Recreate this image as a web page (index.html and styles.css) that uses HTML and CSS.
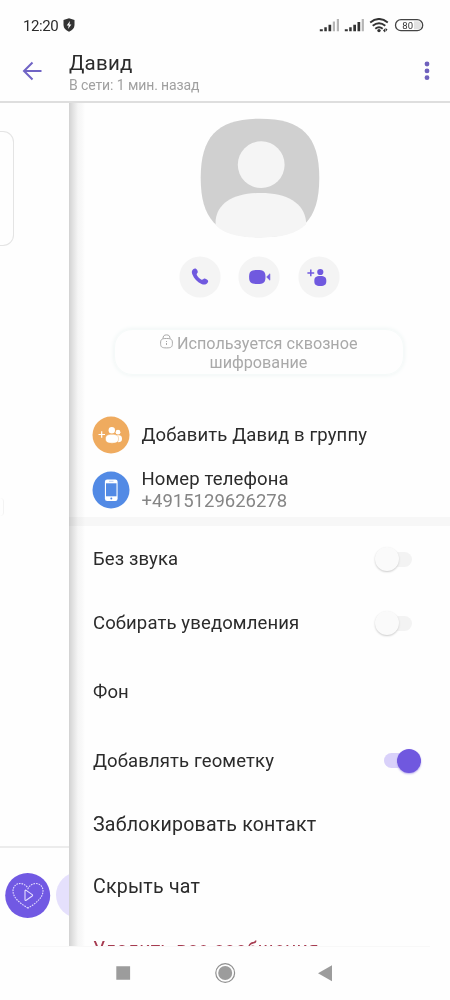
FILE: index.html
```html
<!DOCTYPE html>
<html lang="ru">
<head>
<meta charset="utf-8">
<title>Давид</title>
<link rel="stylesheet" href="styles.css">
</head>
<body>
<div class="screen">
  <div class="status">
    <span class="clock">12:20</span>
    <svg class="shield" width="12" height="14" viewBox="0 0 12 14"><path d="M6 .3 11.500 2v5c0 3-2.300 5.400-5.500 6.700C2.800 12.400.5 10 .5 7V2z" fill="#333"/><path d="M7 3 3.700 7.500h2L5 11l3.400-4.500h-2z" fill="#fff"/></svg>
    <svg class="signals" width="112" height="16" viewBox="0 0 112 16">
      <g fill="#333"><path d="M.8 11.300h3v2h-3zM5.300 9.300h2.500v4H5.300zM9.500 6.800h2.700v6.500H9.500z"/><path d="M25.800 11.300h3v2h-3zM30.200 9.300h2.500v4h-2.500zM34.300 6.800H37v6.500h-2.700zM38.500 4h2.700v9.300h-2.700z"/></g>
      <path d="M13.800 3.500H16v9.800h-2.200zM17.800 1H20v12.300h-2.200zM42.700 1h2.200v12.300h-2.200z" fill="#b5b5b5"/>
      <g fill="none" stroke="#333" stroke-width="1.900"><path d="M51.200 4.400q8.800-6.900 17.600 0"/><path d="M53.700 7.700q6.300-5 12.600 0"/><path d="M56.300 10.700q3.700-3 7.400 0"/></g>
      <circle cx="60" cy="12.600" r="1.700" fill="#333"/><path d="m64 12.500 2-2v4zm4.500-1-2 2.500v-4z" fill="#333"/>
      <rect x="76.500" y="1.700" width="27.200" height="11" rx="5.500" fill="#fff" stroke="#444" stroke-width="1.300"/><path d="M95 3.200h3.500a4 4 0 0 1 0 8H95z" fill="#e2e2e2"/>
      <text class="battery" x="83.300" y="10.700">80</text>
    </svg>
  </div>
  <header class="toolbar">
    <svg class="back" width="20" height="20" viewBox="0 0 20 20" fill="none" stroke="#7064c5" stroke-width="2"><path d="M19.500 10H2M10.500 1.500 2 10l8.500 8.500"/></svg>
    <div class="heading"><h1 class="name">Давид</h1><p class="seen">В сети: 1 мин. назад</p></div>
    <svg class="more" width="6" height="20" viewBox="0 0 6 20" fill="#6f61bd"><circle cx="3" cy="3" r="2.400"/><circle cx="3" cy="9.900" r="2.400"/><circle cx="3" cy="16.700" r="2.400"/></svg>
  </header>
  <main class="content">
    <aside class="chat">
      <div class="bubble"></div>
      <div class="reaction"></div>
      <div class="composer">
        <svg class="heart" width="46" height="46" viewBox="0 0 46 46"><circle cx="22.700" cy="23.500" r="22.500" fill="#7159e3"/><path d="M23 36C16 32 8 26 8 19c0-4.500 3.300-7.500 7-7.500 3.500 0 6.500 2 8 5 1.500-3 4.500-5 8-5 3.700 0 7 3 7 7.500C38 26 30 32 23 36z" fill="none" stroke="#e6dfff" stroke-width="1.100" stroke-dasharray="1.600 1"/><path d="M20 19v8.500q0 1.500 1.200.8l6-4.300q.8-.7 0-1.400l-6-4.200Q20 17.700 20 19z" fill="none" stroke="#e6dfff" stroke-width="1.100"/></svg>
        <div class="next"></div>
      </div>
    </aside>
    <section class="panel">
      <svg class="avatar" width="120" height="120" viewBox="0 0 120 120">
        <path d="M60 .7C102 .7 119.300 18 119.300 60S102 119.300 60 119.300.7 102 .7 60 18 .7 60 .7z" fill="#d0d0d0"/>
        <circle cx="61.200" cy="46.700" r="23.400" fill="#f5f5f5"/>
        <path d="M15.600 107V103C17 85 34 75 60.500 75S104 85 106 103v3.500C96 116 82 119.500 60 119.500S24 116 15.600 107z" fill="#f5f5f5"/>
      </svg>
      <div class="actions">
        <svg class="action" width="42" height="42" viewBox="0 0 42 42"><circle cx="21" cy="21" r="20.600" fill="#f4f4f4"/><path d="M14.200 13.200c1.500-1.300 3.200-.8 4 .8l.6 1.800c.4 1.300-1.700 1.900-1 3.200 1.300 2.300 2.500 3.500 4.800 4.700 1.200.5 1.900-1.600 3.300-1.100l2 .8c1.500.7 1.700 2.300.5 3.600-1.500 1.800-3.500 2-5.900 1-4.400-2-7.300-5.200-9.200-9.700-.8-2.200-.6-3.900.9-5.100z" fill="#7059df"/></svg>
        <svg class="action" width="42" height="42" viewBox="0 0 42 42"><circle cx="21" cy="21" r="20.600" fill="#f4f4f4"/><path d="M19.300 14c6.500 0 8.200 1.600 8.200 7s-1.700 7-8.200 7-8.200-1.600-8.200-7 1.700-7 8.200-7z" fill="#7059df"/><path d="m28.600 21 3.300-3.200v6.400z" fill="#7059df" stroke="#7059df" stroke-width=".6" stroke-linejoin="round"/></svg>
        <svg class="action" width="42" height="42" viewBox="0 0 42 42"><circle cx="21" cy="21" r="20.600" fill="#f4f4f4"/><circle cx="22.300" cy="16" r="3.100" fill="#7059df"/><path d="M22.300 20c4.600 0 6 1.400 6 5s-1.400 5-6 5-6-1.400-6-5 1.400-5 6-5z" fill="#7059df"/><path d="M9.400 16.900h6.800M12.800 13.500v6.800" stroke="#7059df" stroke-width="1.500"/></svg>
      </div>
      <div class="secure">
        <p class="secure-line"><svg width="13" height="15" viewBox="0 0 13 15" fill="none" stroke="#a9a9a9"><path d="M6.500 4.500c5 0 5.900 1 5.900 4.700s-.9 4.700-5.900 4.700-5.900-1-5.900-4.700.9-4.700 5.900-4.700zM3 4.800C3 2 4 .9 6.500.9S10 2 10 4.800M6.500 7v1m0 1v2"/></svg><span class="secure-text">Используется сквозное</span></p>
        <p class="secure-last">шифрование</p>
      </div>
      <div class="contact">
        <div class="entry"><svg width="38" height="38" viewBox="0 0 38 38"><circle cx="19" cy="19" r="18.500" fill="#efab5f"/><g fill="#fff"><circle cx="19.800" cy="14.200" r="3.200"/><circle cx="26" cy="16.200" r="2.400"/><path d="M24 19.500c5-.7 6 1 6 3.500 0 2.200-1.300 3.200-4 3.200z"/><path d="M20 18.300c5 0 6.500 1.500 6.500 4.500s-1.500 4.400-6.500 4.400-6.500-1.400-6.500-4.400 1.500-4.500 6.500-4.500z" stroke="#efab5f" stroke-width=".5"/></g><path d="M6.500 18.500H13M9.700 15.300v6.400" stroke="#fff" stroke-width="1.200"/></svg><p class="label add">Добавить Давид в группу</p></div>
        <div class="entry phone"><svg width="38" height="38" viewBox="0 0 38 38"><circle cx="19" cy="19" r="18.500" fill="#528ae5"/><rect x="12.900" y="8.500" width="12.700" height="21.500" rx="2.300" fill="#fff"/><path d="M14 12.300h10.500v13H14z" fill="#528ae5"/><path d="M17 10.300h4.500" stroke="#a9c4f2" stroke-width=".8"/><circle cx="19.300" cy="27.600" r="1" fill="#528ae5"/></svg><div><p class="label">Номер телефона</p><p class="number">+4915129626278</p></div></div>
      </div>
      <div class="divider"></div>
      <div class="settings">
        <div class="row"><span class="label">Без звука</span><span class="switch"><i class="track"></i><i class="thumb"></i></span></div>
        <div class="row"><span class="label">Собирать уведомления</span><span class="switch"><i class="track"></i><i class="thumb"></i></span></div>
        <div class="row row-bg"><span class="label">Фон</span></div>
        <div class="row row-geo"><span class="label">Добавлять геометку</span><span class="switch on"><i class="track"></i><i class="thumb"></i></span></div>
        <div class="row row-block"><span class="label large">Заблокировать контакт</span></div>
        <div class="row row-hide"><span class="label large">Скрыть чат</span></div>
        <div class="row row-delete"><span class="label large delete">Удалить все сообщения</span></div>
      </div>
    </section>
  </main>
  <nav class="navbar">
    <svg width="450" height="54" viewBox="0 1 450 54"><path d="M20 1.200h410" stroke="#f5f5f5"/><path d="M116.300 21.300h13.800v13.500h-13.800zM332 20.300v16l-14-8z" fill="#9c9c9c"/><circle cx="225.200" cy="28" r="9.400" fill="none" stroke="#909090" stroke-width="1.200"/><circle cx="225.200" cy="28" r="7" fill="#9c9c9c"/></svg>
  </nav>
</div>
</body>
</html>
```
FILE: styles.css
```css
* { box-sizing: border-box; }
body, h1, p { margin: 0; }
body { font-family: Roboto, "Noto Sans", sans-serif; color: #2b2b2b; background: #fefefe; }
svg { display: block; flex: none; }
.screen { width: 450px; height: 1000px; display: flex; flex-direction: column; overflow: hidden; }
.status { height: 48px; display: flex; padding: 18px 19px 0 23px; }
.clock { font-size: 15px; line-height: 16px; letter-spacing: -.4px; width: 40px; white-space: nowrap; }
.signals { margin: 0 0 0 auto; }
.battery { font-size: 9.500px; font-family: Roboto, sans-serif; fill: #333; }
.toolbar { height: 55px; display: flex; padding: 0 20px 0 22px; border-bottom: 2px solid #dedede; }
.back { margin-top: 13px; }
.heading { margin-left: 27px; flex: 1; white-space: nowrap; }
.name { font-size: 20.500px; font-weight: 400; line-height: 26px; margin-top: 2px; letter-spacing: .2px; }
.seen { font-size: 14px; line-height: 18px; letter-spacing: -.1px; color: #a0a0a0; }
.more { margin-top: 13px; }
.content { height: 843px; flex: none; display: flex; overflow: hidden; }
.chat { width: 69px; flex: none; overflow: hidden; display: flex; flex-direction: column; }
.bubble { width: 14px; height: 115px; flex: none; margin-top: 28px; border: 1px solid #e4e4e4; border-left: 0; border-radius: 0 11px 11px 0; }
.reaction { width: 4px; height: 18px; flex: none; margin-top: 252px; border-right: 1px solid #f3f3f3; border-radius: 0 9px 9px 0; }
.composer { height: 100px; flex: none; margin-top: auto; border-top: 2px solid #ececec; display: flex; gap: 5px; padding: 24px 0 0 4.500px; }
.next { width: 46px; height: 46px; border-radius: 50%; flex: none; background: #e5e0fc; }
.panel { flex: 1; background: linear-gradient(90deg, #d2d2d2 0, #e2e2e2 4px, #f5f5f5 9px, #f9f9f9 13px, #fefefe 16px); }
.avatar { margin: 15px 0 0 130.500px; }
.actions { display: flex; gap: 17.500px; margin: 18px 0 0 109.700px; }
.secure { width: 290px; height: 46px; margin: 31px 0 0 44.500px; border: 1px solid #f5faf9; border-radius: 18px; box-shadow: 0 0 5px #ecf4f3; color: #a9a9a9; font-size: 16.200px; line-height: 19px; padding-top: 4px; text-align: center; white-space: nowrap; }
.secure-line { display: flex; justify-content: center; gap: 4.500px; }
.contact { padding: 41px 0 0 23px; }
.entry { display: flex; align-items: center; gap: 11.500px; height: 38px; }
.phone { margin-top: 17px; }
.label { font-size: 18.500px; line-height: 22px; white-space: nowrap; letter-spacing: .13px; }
.large { font-size: 19.600px; letter-spacing: .2px; }
.number { font-size: 18.500px; line-height: 22px; color: #858585; }
.divider { height: 9px; margin-top: 8px; background: #f8f8f8; mix-blend-mode: multiply; }
.settings { padding: 1px 0 0 24px; }
.row { height: 64px; display: flex; align-items: center; justify-content: space-between; padding-right: 38px; }
.row-bg { height: 74px; }
.row-geo { height: 63px; padding-right: 29px; }
.row-block { height: 65px; }
.row-hide { height: 60px; }
.row-delete { height: 66px; }
.delete { color: #a63b50; }
.switch { display: grid; width: 37px; height: 26px; align-items: center; }
.track, .thumb { grid-area: 1 / 1; display: block; }
.track { width: 31px; height: 15px; justify-self: end; border-radius: 8px; background: #f3f3f3; }
.thumb { width: 24px; height: 24px; border-radius: 50%; background: #fafafa; box-shadow: 0 1px 2px #ccc; }
.on .track { width: 32px; justify-self: start; background: #d9d1fa; }
.on .thumb { justify-self: end; background: #7058df; box-shadow: 0 1px 2px #b8abed; }
.navbar { height: 54px; flex: none; background: #fefefe; }
```
